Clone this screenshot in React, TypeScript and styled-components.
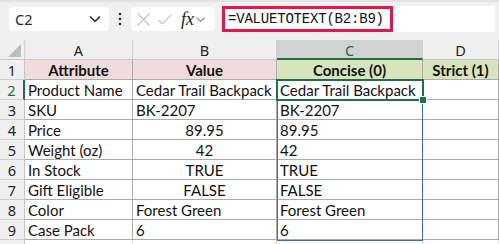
import React from "react";
import styled, { createGlobalStyle } from "styled-components";

const Global = createGlobalStyle`
  html, body { margin: 0; padding: 0; background: #f0f0f0; }
  body { width: 499px; height: 244px; overflow: hidden; font-family: "Segoe UI", "Noto Sans", "Liberation Sans", sans-serif; }
`;

const Page = styled.div`
  width: 499px;
  height: 244px;
  display: flex;
  flex-direction: column;
  background: #f0f0f0;
  border-top: 2px solid #e2e2e2;
  box-sizing: border-box;
  overflow: hidden;
`;

const FormulaBar = styled.div`
  height: 38px;
  flex: none;
  display: flex;
  align-items: center;
  padding: 4px 4px 8px 9px;
  box-sizing: border-box;
`;

const NameBox = styled.div`
  width: 100px;
  height: 24px;
  background: #fff;
  border-radius: 4px;
  display: flex;
  align-items: center;
  justify-content: space-between;
  padding: 0 7px 0 6px;
  box-sizing: border-box;
  font-size: 14.5px;
  color: #1b2a44;
`;

const Dots = styled.div`
  width: 22px;
  display: flex;
  justify-content: center;
`;

const FxBox = styled.div`
  width: 84px;
  height: 24px;
  background: #fff;
  border-radius: 4px;
  display: flex;
  align-items: center;
  padding: 0 0 0 5px;
  box-sizing: border-box;
  gap: 6px;
`;

const FxText = styled.span`
  font-family: "Liberation Serif", "DejaVu Serif", serif;
  font-style: italic;
  font-size: 18px;
  color: #222;
  margin-left: 2px;
  line-height: 1;
`;

const FxChevron = styled.span`
  margin-left: -5px;
  display: flex;
`;

const InputArea = styled.div`
  margin-left: 7px;
  flex: 1;
  height: 26px;
  background: #fff;
  display: flex;
  align-items: stretch;
`;

const Highlight = styled.div`
  width: 171px;
  border: 3px solid #e2184c;
  box-sizing: border-box;
  display: flex;
  align-items: center;
  padding-left: 3px;
  font-family: "Liberation Mono", "DejaVu Sans Mono", monospace;
  font-size: 14px;
  color: #111;
  letter-spacing: -0.2px;
`;

const SheetWrap = styled.div`
  position: relative;
  flex: 1;
  background: #fff;
`;

const Grid = styled.div`
  display: grid;
  grid-template-columns: 25px 108px 144px 146px 76px;
  grid-auto-rows: 20px;
`;

const Corner = styled.div`
  background: #f0f0f0;
  border-right: 1px solid #d0d0d0;
  border-bottom: 1px solid #c6c6c6;
  box-sizing: border-box;
  position: relative;
  overflow: hidden;
`;

const ColHead = styled.div<{ $sel?: boolean }>`
  background: ${(p) => (p.$sel ? "#d2d2d2" : "#f0f0f0")};
  color: ${(p) => (p.$sel ? "#1d6b40" : "#222")};
  border-right: 1px solid #d0d0d0;
  border-bottom: ${(p) => (p.$sel ? "2px solid #1e7145" : "1px solid #c6c6c6")};
  box-sizing: border-box;
  display: flex;
  align-items: center;
  justify-content: center;
  font-size: 14.5px;
  padding-top: ${(p) => (p.$sel ? "1px" : "0")};
`;

const RowHead = styled.div<{ $sel?: boolean }>`
  background: #f0f0f0;
  color: ${(p) => (p.$sel ? "#1d6b40" : "#222")};
  border-bottom: 1px solid #d0d0d0;
  border-right: ${(p) => (p.$sel ? "2px solid #1e7145" : "1px solid #c6c6c6")};
  box-sizing: border-box;
  display: flex;
  align-items: center;
  justify-content: center;
  font-size: 14.5px;
`;

const Cell = styled.div<{ $bg?: string; $bold?: boolean; $align?: string; $empty?: boolean }>`
  background: ${(p) => p.$bg || "#fff"};
  border-right: 1px solid ${(p) => (p.$empty ? "#e1e1e1" : "#ababab")};
  border-bottom: 1px solid ${(p) => (p.$empty ? "#e1e1e1" : "#ababab")};
  box-sizing: border-box;
  display: flex;
  align-items: center;
  justify-content: ${(p) => p.$align || "flex-start"};
  padding: 0 3px 0 3px;
  font-family: "Lato", "Open Sans", sans-serif;
  font-size: 15px;
  font-weight: ${(p) => (p.$bold ? 700 : 400)};
  color: #111;
  white-space: nowrap;
  overflow: hidden;
`;

const Selection = styled.div`
  position: absolute;
  left: 276px;
  top: 39px;
  width: 148px;
  height: 22px;
  border: 2px solid #1e7145;
  box-sizing: border-box;
  pointer-events: none;
`;

const Handle = styled.div`
  position: absolute;
  left: 419px;
  top: 56px;
  width: 6px;
  height: 6px;
  background: #1e7145;
  border: 1px solid #fff;
`;

const RangeBox = styled.div`
  position: absolute;
  left: 277px;
  top: 61px;
  width: 146px;
  height: 140px;
  border: 1.5px solid #3a6bcc;
  border-top: none;
  box-sizing: border-box;
  pointer-events: none;
`;

const PINK = "#f2dcdb";
const GREEN = "#d8e4bc";

type Row = [string, string, string, string];
const rows: Row[] = [
  ["Product Name", "Cedar Trail Backpack", "Cedar Trail Backpack", "flex-start"],
  ["SKU", "BK-2207", "BK-2207", "flex-start"],
  ["Price", "89.95", "89.95", "center"],
  ["Weight (oz)", "42", "42", "center"],
  ["In Stock", "TRUE", "TRUE", "center"],
  ["Gift Eligible", "FALSE", "FALSE", "center"],
  ["Color", "Forest Green", "Forest Green", "flex-start"],
  ["Case Pack", "6", "6", "flex-start"],
];

const Chevron = ({ size = 12, color = "#333" }: { size?: number; color?: string }) => (
  <svg width={size} height={size} viewBox="0 0 12 12">
    <path d="M2 4.2 L6 8 L10 4.2" fill="none" stroke={color} strokeWidth="1.3" strokeLinecap="round" strokeLinejoin="round" />
  </svg>
);

export default function App() {
  return (
    <>
      <Global />
      <Page>
        <FormulaBar>
          <NameBox>
            <span>C2</span>
            <Chevron size={14} color="#333" />
          </NameBox>
          <Dots>
            <svg width="4" height="14" viewBox="0 0 4 14">
              <circle cx="2" cy="2" r="1.3" fill="#333" />
              <circle cx="2" cy="7" r="1.3" fill="#333" />
              <circle cx="2" cy="12" r="1.3" fill="#333" />
            </svg>
          </Dots>
          <FxBox>
            <svg width="15" height="15" viewBox="0 0 15 15">
              <path d="M1.5 1.5 L13.5 13.5 M13.5 1.5 L1.5 13.5" stroke="#c4c4c4" strokeWidth="1.2" fill="none" />
            </svg>
            <svg width="16" height="15" viewBox="0 0 16 15">
              <path d="M1.5 8 L5.5 12 L14.5 2.5" stroke="#c4c4c4" strokeWidth="1.2" fill="none" />
            </svg>
            <FxText>fx</FxText>
            <FxChevron>
              <Chevron size={11} color="#888" />
            </FxChevron>
          </FxBox>
          <InputArea>
            <Highlight>=VALUETOTEXT(B2:B9)</Highlight>
          </InputArea>
        </FormulaBar>
        <SheetWrap>
          <Grid>
            <Corner>
              <svg width="25" height="20" viewBox="0 0 25 20" style={{ position: "absolute", left: 0, top: 0 }}>
                <path d="M21 4 L21 17 L8 17 Z" fill="#bdbdbd" />
              </svg>
            </Corner>
            <ColHead>A</ColHead>
            <ColHead>B</ColHead>
            <ColHead $sel>C</ColHead>
            <ColHead>D</ColHead>

            <RowHead>1</RowHead>
            <Cell $bg={PINK} $bold $align="center">Attribute</Cell>
            <Cell $bg={PINK} $bold $align="center">Value</Cell>
            <Cell $bg={GREEN} $bold $align="center">Concise (0)</Cell>
            <Cell $bg={GREEN} $bold $align="center">Strict (1)</Cell>

            {rows.map((r, i) => (
              <React.Fragment key={i}>
                <RowHead $sel={i === 0}>{i + 2}</RowHead>
                <Cell>{r[0]}</Cell>
                <Cell $align={r[3]}>{r[1]}</Cell>
                <Cell>{r[2]}</Cell>
                <Cell />
              </React.Fragment>
            ))}
            <RowHead />
            <Cell $empty />
            <Cell $empty />
            <Cell $empty />
            <Cell $empty />
          </Grid>
          <RangeBox />
          <Selection />
          <Handle />
        </SheetWrap>
      </Page>
    </>
  );
}
